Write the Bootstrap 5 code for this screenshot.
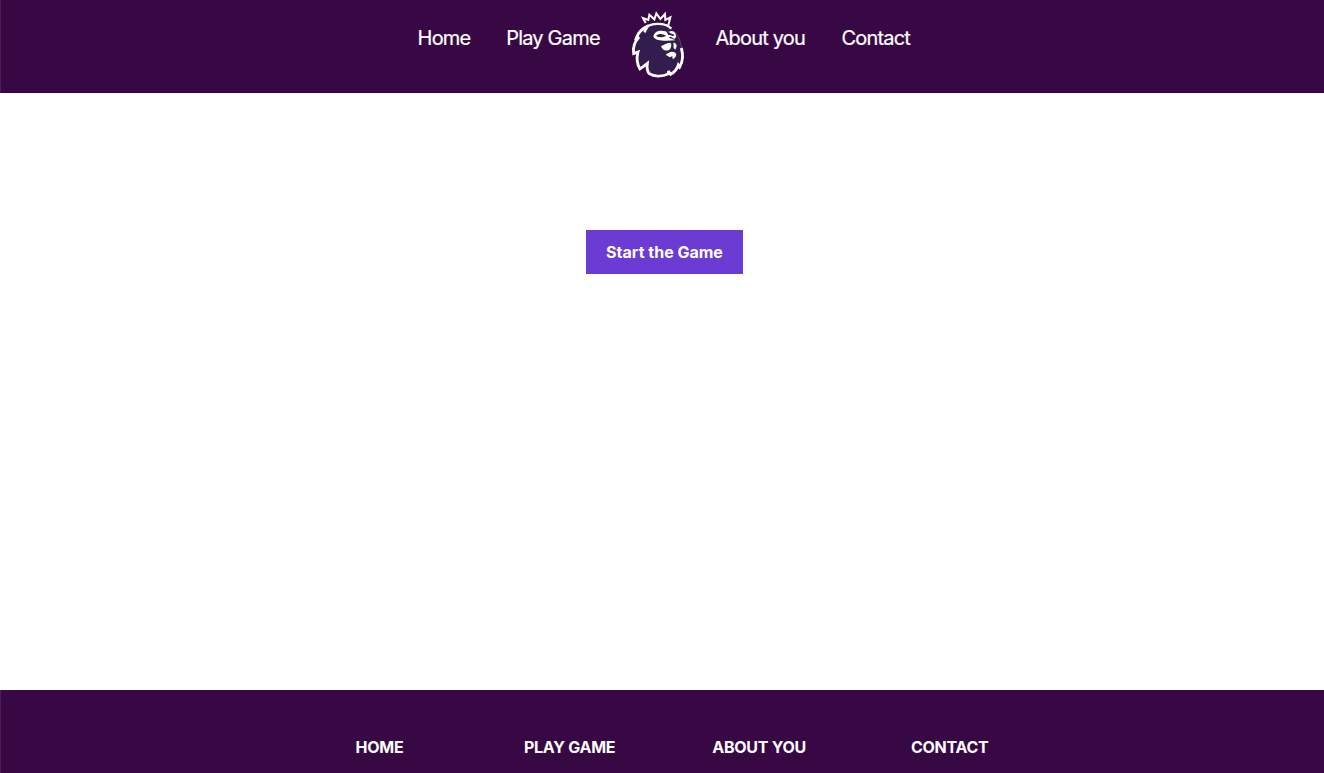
<!DOCTYPE html>
<html lang="en">
<head>
<meta charset="utf-8">
<meta name="viewport" content="width=device-width, initial-scale=1">
<title>Start the Game</title>
<link href="https://cdn.jsdelivr.net/npm/bootstrap@5.3.0/dist/css/bootstrap.min.css" rel="stylesheet">
<style>
body { font-family: Inter, "Liberation Sans", sans-serif; }
.site-bar { background: #380845; border-left: 1px solid #4a2055; }
.site-head { height: 93px; border-bottom: 1px solid #2c0537; padding-left: 416.6px; }
.site-head a { font-size: 20px; line-height: 30px; letter-spacing: -.8px; margin-top: 23px; flex: none; -webkit-text-stroke: .2px #fff; }
.w-home { width: 88.6px; }
.w-play { width: 114.8px; }
.w-about { width: 125.8px; }
.brand-mark { width: 72px; height: 82px; margin: 4px 21.6px 0 1px; flex: none; }
.start-btn { margin-top: 137px; margin-left: 5px; width: 157px; height: 44px; background: #6c3bd3; font-size: 16px; letter-spacing: 0; }
.site-foot { height: 83px; padding: 45px 0 0 354.5px; }
.site-foot a { font-size: 16px; line-height: 24px; font-weight: 700; letter-spacing: -.27px; flex: none; }
.f-home { width: 168.5px; }
.f-play { width: 188.3px; }
.f-about { width: 198.7px; }
</style>
</head>
<body class="vh-100 d-flex flex-column bg-white overflow-hidden">
<header class="site-bar site-head d-flex align-items-start">
  <a href="#" class="w-home text-white text-decoration-none text-nowrap">Home</a>
  <a href="#" class="w-play text-white text-decoration-none text-nowrap">Play Game</a>
  <svg class="brand-mark" viewBox="0 -1 216 246" aria-label="Lion logo">
    <path fill="#331d4e" d="M73 65C95 52 137 54 158 82C171 99 184 125 179 162L150 205L90 210L50 180L38 140L50 99Z"/>
    <path fill="none" stroke="#fff" stroke-width="8.5" stroke-linejoin="miter" d="M80 64C62 72 48 86 43 101L51 98C38 112 32 130 35 148L48 143C44 158 45 179 54 194L76 177C74 193 76 202 82 208C96 218 121 217 140 208L139 200L146 210C157 204 165 194 169 182L173 188C182 173 184 152 178 131"/>
    <path fill="none" stroke="#fff" stroke-width="6" stroke-linejoin="miter" d="M71 56L63 41L79 47L82 31L97 45L103 27L115 44L129 29L130 47L145 39L139 63"/>
    <path fill="none" stroke="#fff" stroke-width="7" d="M66 76C80 54 129 53 148 73M67 84L75 69"/>
    <path fill="#fff" d="M94 98C96 84 106 78 119 79C132 80 138 85 149 80C158 80 163 89 162 99L157 104L146 97L140 99C146 104 155 104 160 108C142 110 118 110 108 107C102 105 98 102 94 98Z"/>
    <path fill="#331d4e" d="M102 94C112 86 123 89 133 95L120 99L108 98ZM146 87L157 91L154 96L144 92ZM131 78L141 83L149 91L139 92Z"/>
    <path fill="#fff" d="M117 125C126 122 134 115 144 115C149 117 149 124 146 131C143 138 136 140 128 138C123 136 119 131 117 125ZM154 115C160 115 165 120 164 126L160 136L155 131ZM131 151C138 146 143 142 150 142C157 142 162 146 163 150C163 156 158 162 152 165L151 155L144 159L137 155Z"/>
    <path fill="none" stroke="#fff" stroke-width="2" opacity=".3" d="M160 84C171 97 178 115 179 136"/>
  </svg>
  <a href="#" class="w-about text-white text-decoration-none text-nowrap">About you</a>
  <a href="#" class="text-white text-decoration-none text-nowrap">Contact</a>
</header>
<main class="flex-grow-1 d-flex justify-content-center align-items-start">
  <button type="button" class="start-btn btn rounded-0 border-0 p-0 text-white fw-bold text-nowrap">Start the Game</button>
</main>
<footer class="site-bar site-foot d-flex align-items-start">
  <a href="#" class="f-home text-white text-decoration-none text-nowrap">HOME</a>
  <a href="#" class="f-play text-white text-decoration-none text-nowrap">PLAY GAME</a>
  <a href="#" class="f-about text-white text-decoration-none text-nowrap">ABOUT YOU</a>
  <a href="#" class="text-white text-decoration-none text-nowrap">CONTACT</a>
</footer>
<script src="https://cdn.jsdelivr.net/npm/bootstrap@5.3.0/dist/js/bootstrap.bundle.min.js"></script>
</body>
</html>
